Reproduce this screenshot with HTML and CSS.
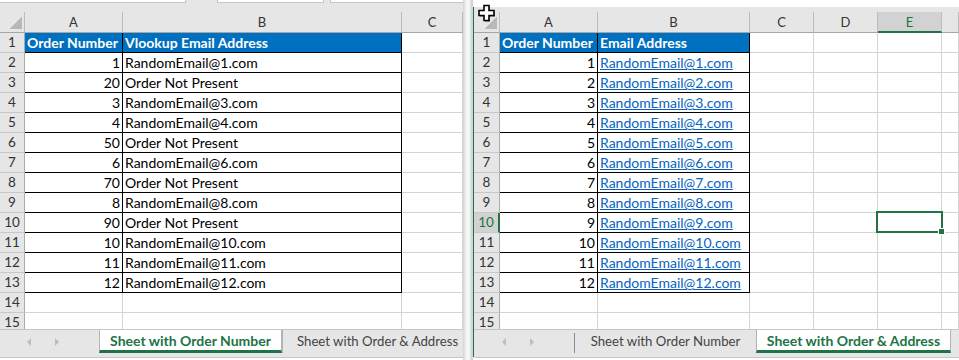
FILE: index.html
```html
<!DOCTYPE html>
<html lang="en">
<head>
  <meta charset="UTF-8" />
  <title>Vlookup Email Address</title>
  <link rel="stylesheet" href="styles.css">
</head>
<body>
  <div class="pane left">
    <div class="topbar">
      <div class="box box1"></div>
      <div class="box box2"></div>
      <div class="box box3"></div>
    </div>
    <div class="sheet">
      <div class="row colhead">
        <div class="c corner"><span class="tri"></span></div>
        <div class="c hd">A</div>
        <div class="c hd">B</div>
        <div class="c hd">C</div>
      </div>
      <div class="row"><div class="c rh tr">1</div><div class="c t th">Order Number</div><div class="c t th">Vlookup Email Address</div><div class="c"></div></div>
      <div class="row"><div class="c rh tr">2</div><div class="c t num">1</div><div class="c t">RandomEmail@1.com</div><div class="c"></div></div>
      <div class="row"><div class="c rh tr">3</div><div class="c t num">20</div><div class="c t">Order Not Present</div><div class="c"></div></div>
      <div class="row"><div class="c rh tr">4</div><div class="c t num">3</div><div class="c t">RandomEmail@3.com</div><div class="c"></div></div>
      <div class="row"><div class="c rh tr">5</div><div class="c t num">4</div><div class="c t">RandomEmail@4.com</div><div class="c"></div></div>
      <div class="row"><div class="c rh tr">6</div><div class="c t num">50</div><div class="c t">Order Not Present</div><div class="c"></div></div>
      <div class="row"><div class="c rh tr">7</div><div class="c t num">6</div><div class="c t">RandomEmail@6.com</div><div class="c"></div></div>
      <div class="row"><div class="c rh tr">8</div><div class="c t num">70</div><div class="c t">Order Not Present</div><div class="c"></div></div>
      <div class="row"><div class="c rh tr">9</div><div class="c t num">8</div><div class="c t">RandomEmail@8.com</div><div class="c"></div></div>
      <div class="row"><div class="c rh tr">10</div><div class="c t num">90</div><div class="c t">Order Not Present</div><div class="c"></div></div>
      <div class="row"><div class="c rh tr">11</div><div class="c t num">10</div><div class="c t">RandomEmail@10.com</div><div class="c"></div></div>
      <div class="row"><div class="c rh tr">12</div><div class="c t num">11</div><div class="c t">RandomEmail@11.com</div><div class="c"></div></div>
      <div class="row"><div class="c rh tr">13</div><div class="c t num">12</div><div class="c t">RandomEmail@12.com</div><div class="c"></div></div>
      <div class="row"><div class="c rh">14</div><div class="c"></div><div class="c"></div><div class="c"></div></div>
      <div class="row"><div class="c rh">15</div><div class="c"></div><div class="c"></div><div class="c"></div></div>
    </div>
    <div class="tabs">
      <div class="nav">
        <span class="arrow prev"></span>
        <span class="arrow next"></span>
      </div>
      <div class="tab active">Sheet with Order Number</div>
      <div class="tab">Sheet with Order &amp; Address</div>
    </div>
    <div class="foot"></div>
  </div>

  <div class="split"></div>
  <div class="edge"></div>

  <div class="pane right">
    <div class="topbar"></div>
    <div class="sheet">
      <div class="row colhead">
        <div class="c corner"><span class="tri"></span></div>
        <div class="c hd">A</div>
        <div class="c hd">B</div>
        <div class="c hd">C</div>
        <div class="c hd">D</div>
        <div class="c hd sel">E</div>
        <div class="c hd"></div>
      </div>
      <div class="row"><div class="c rh tr">1</div><div class="c t th">Order Number</div><div class="c t th">Email Address</div><div class="c"></div><div class="c"></div><div class="c"></div><div class="c"></div></div>
      <div class="row"><div class="c rh tr">2</div><div class="c t num">1</div><div class="c t"><span class="link">RandomEmail@1.com</span></div><div class="c"></div><div class="c"></div><div class="c"></div><div class="c"></div></div>
      <div class="row"><div class="c rh tr">3</div><div class="c t num">2</div><div class="c t"><span class="link">RandomEmail@2.com</span></div><div class="c"></div><div class="c"></div><div class="c"></div><div class="c"></div></div>
      <div class="row"><div class="c rh tr">4</div><div class="c t num">3</div><div class="c t"><span class="link">RandomEmail@3.com</span></div><div class="c"></div><div class="c"></div><div class="c"></div><div class="c"></div></div>
      <div class="row"><div class="c rh tr">5</div><div class="c t num">4</div><div class="c t"><span class="link">RandomEmail@4.com</span></div><div class="c"></div><div class="c"></div><div class="c"></div><div class="c"></div></div>
      <div class="row"><div class="c rh tr">6</div><div class="c t num">5</div><div class="c t"><span class="link">RandomEmail@5.com</span></div><div class="c"></div><div class="c"></div><div class="c"></div><div class="c"></div></div>
      <div class="row"><div class="c rh tr">7</div><div class="c t num">6</div><div class="c t"><span class="link">RandomEmail@6.com</span></div><div class="c"></div><div class="c"></div><div class="c"></div><div class="c"></div></div>
      <div class="row"><div class="c rh tr">8</div><div class="c t num">7</div><div class="c t"><span class="link">RandomEmail@7.com</span></div><div class="c"></div><div class="c"></div><div class="c"></div><div class="c"></div></div>
      <div class="row"><div class="c rh tr">9</div><div class="c t num">8</div><div class="c t"><span class="link">RandomEmail@8.com</span></div><div class="c"></div><div class="c"></div><div class="c"></div><div class="c"></div></div>
      <div class="row"><div class="c rh tr sel">10</div><div class="c t num">9</div><div class="c t"><span class="link">RandomEmail@9.com</span></div><div class="c"></div><div class="c"></div><div class="c active-cell"><div class="selection"><span class="handle"></span></div></div><div class="c"></div></div>
      <div class="row"><div class="c rh tr">11</div><div class="c t num">10</div><div class="c t"><span class="link">RandomEmail@10.com</span></div><div class="c"></div><div class="c"></div><div class="c"></div><div class="c"></div></div>
      <div class="row"><div class="c rh tr">12</div><div class="c t num">11</div><div class="c t"><span class="link">RandomEmail@11.com</span></div><div class="c"></div><div class="c"></div><div class="c"></div><div class="c"></div></div>
      <div class="row"><div class="c rh tr">13</div><div class="c t num">12</div><div class="c t"><span class="link">RandomEmail@12.com</span></div><div class="c"></div><div class="c"></div><div class="c"></div><div class="c"></div></div>
      <div class="row"><div class="c rh">14</div><div class="c"></div><div class="c"></div><div class="c"></div><div class="c"></div><div class="c"></div><div class="c"></div></div>
      <div class="row"><div class="c rh">15</div><div class="c"></div><div class="c"></div><div class="c"></div><div class="c"></div><div class="c"></div><div class="c"></div></div>
    </div>
    <div class="tabs">
      <div class="nav">
        <span class="arrow prev"></span>
        <span class="arrow next"></span>
      </div>
      <div class="sep"></div>
      <div class="tab">Sheet with Order Number</div>
      <div class="tab active">Sheet with Order &amp; Address</div>
    </div>
    <div class="foot"></div>

    <svg class="cursor" width="18" height="18" viewBox="0 0 18 18">
      <path d="M7 3h5v5h5v5h-5v5h-5v-5h-5v-5h5z" fill="#9a9a9a" />
      <path d="M6 1.5h5v5h5v5h-5v5h-5v-5h-5v-5h5z" fill="#fff" stroke="#000" stroke-width="1.6" stroke-linejoin="miter" />
    </svg>
  </div>
</body>
</html>
```

FILE: styles.css
```css
* {
  box-sizing: border-box;
}

body {
  margin: 0;
  width: 959px;
  height: 360px;
  overflow: hidden;
  display: flex;
  font-family: Lato, 'Liberation Sans', sans-serif;
  font-size: 14px;
  color: #000;
  background: #fff;
}

.pane {
  display: flex;
  flex-direction: column;
  overflow: hidden;
  position: relative;
}

.left { width: 463px; }
.right { flex: 1; }

.split {
  width: 10px;
  background: linear-gradient(to right, #d4d4d4 0, #e6e6e6 2px, #f8f8f8 4px, #f1f1f1 7px, #c9c9c9 9px, #dcdcdc 10px);
}

.edge {
  width: 1px;
  background: linear-gradient(#fff 7px, #217346 7px, #217346 357px, #fff 357px);
}

/* top strip */
.topbar {
  height: 12px;
  flex: none;
  display: flex;
  background: #e6e6e6;
}

.right .topbar {
  background: linear-gradient(#fff 7px, #e6e6e6 7px);
}

.box {
  height: 3px;
  background: #fff;
  border: 1px solid #c6c6c6;
  border-top: none;
}

.box1 { width: 186px; border-left: none; }
.box2 { width: 107px; margin-left: 31px; }
.box3 { flex: 1; margin-left: 6px; border-right: none; }

/* grid */
.sheet {
  height: 317px;
  flex: none;
  overflow: hidden;
}

.row {
  display: grid;
  height: 20px;
}

.left .row { grid-template-columns: 25px 98px 279px 61px; }
.right .row { grid-template-columns: 26px 98px 152px 64px 64px 64px 1fr; }

.row.colhead { height: 21px; }

.c {
  border-right: 1px solid #d4d4d4;
  border-bottom: 1px solid #d4d4d4;
  padding: 0 2px;
  line-height: 19px;
  white-space: nowrap;
  overflow: hidden;
}

.hd {
  background: #e6e6e6;
  color: #333;
  font-size: 13px;
  line-height: 21px;
  text-align: center;
  border-right-color: #bcbcbc;
  border-bottom-color: #a6a6a6;
}

.hd.sel {
  background: #d2d2d2;
  color: #217346;
  border-bottom: 2px solid #217346;
}

.corner {
  background: #e6e6e6;
  border-right-color: #bcbcbc;
  border-bottom-color: #a6a6a6;
  display: flex;
  justify-content: flex-end;
  align-items: flex-end;
  padding: 0 2px 3px 0;
}

.tri {
  width: 13px;
  height: 12px;
  background: linear-gradient(to bottom right, transparent 50%, #b8b8b8 50%);
}

.rh {
  background: #e6e6e6;
  color: #333;
  font-size: 13.5px;
  text-align: center;
  border-right-color: #ababab;
  border-bottom-color: #c8c8c8;
}

.rh.sel {
  background: #d2d2d2;
  color: #217346;
  border-right: 2px solid #217346;
}

.t {
  border-right-color: #000;
  border-bottom-color: #000;
}

.num { text-align: right; }

.th {
  background: #0070c0;
  color: #fff;
  font-weight: bold;
}

.link {
  color: #0563c1;
  text-decoration: underline;
}

.active-cell {
  position: relative;
  overflow: visible;
}

.selection {
  position: absolute;
  left: -2px;
  top: -2px;
  right: -2px;
  bottom: -1px;
  border: 2px solid #217346;
  z-index: 1;
}

.handle {
  position: absolute;
  right: -4px;
  bottom: -4px;
  width: 7px;
  height: 7px;
  background: #217346;
  border: 1px solid #fff;
}

/* sheet tabs */
.tabs {
  height: 29px;
  flex: none;
  display: flex;
  background: #e6e6e6;
  border-top: 1px solid #c6c6c6;
  border-bottom: 1px solid #c6c6c6;
}

.nav {
  width: 99px;
  flex: none;
  display: flex;
  align-items: center;
  gap: 24px;
  padding: 0 0 4px 27px;
}

.right .nav {
  width: 100px;
  padding-left: 28px;
}

.arrow {
  width: 0;
  height: 0;
  border-top: 4px solid transparent;
  border-bottom: 4px solid transparent;
}

.arrow.prev { border-right: 4px solid #bdbdbd; }
.arrow.next { border-left: 4px solid #bdbdbd; }

.sep {
  width: 1px;
  height: 20px;
  margin-top: 3px;
  background: #8a8a8a;
}

.tab {
  height: 23px;
  line-height: 23px;
  font-size: 13.2px;
  color: #444;
  text-align: center;
  white-space: nowrap;
  border-left: 1px solid #b4b4b4;
  flex: none;
}

.left .tab { width: 185px; text-align: left; padding-left: 14px; }
.left .tab.active { width: 183px; text-align: center; padding-left: 0; }
.right .tab { width: 181px; border-left: none; }
.right .tab.active { width: 195px; border-left: 1px solid #b4b4b4; }

.tab.active {
  background: #fff;
  color: #217346;
  font-size: 14px;
  font-weight: bold;
  border-right: 1px solid #b4b4b4;
  border-bottom: 3px solid #217346;
  line-height: 22px;
}

.foot {
  flex: 1;
  background: #fff;
}

.cursor {
  position: absolute;
  left: 4px;
  top: 4px;
}
```
